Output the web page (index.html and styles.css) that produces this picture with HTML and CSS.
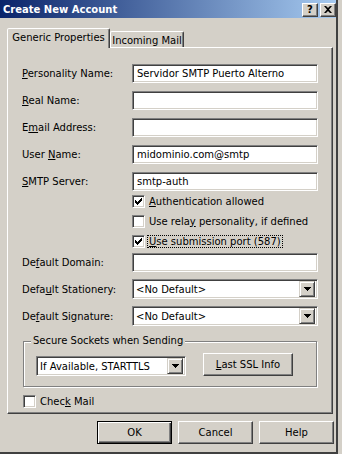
FILE: index.html
```html
<!DOCTYPE html>
<html lang="en">
<head>
    <meta charset="UTF-8">
    <title>Create New Account</title>
    <link rel="stylesheet" href="styles.css">
</head>
<body>
    <div class="window">
        <div class="titlebar">
            <span class="title">Create New Account</span>
            <div class="caption-btns">
                <span class="cbtn help">?</span>
                <span class="cbtn">
                    <svg width="8" height="7" viewBox="0 0 8 7"><path d="M0 0h2l2 2 2-2h2L5 3.5 8 7H6L4 5 2 7H0l3-3.5z" fill="#000"/></svg>
                </span>
            </div>
        </div>

        <div class="client">
            <div class="tabs">
                <div class="tab active">Generic Properties</div>
                <div class="tab">Incoming Mail</div>
            </div>

            <div class="panel">
                <div class="row first">
                    <span class="label"><u>P</u>ersonality Name:</span>
                    <div class="field">Servidor SMTP Puerto Alterno</div>
                </div>
                <div class="row">
                    <span class="label"><u>R</u>eal Name:</span>
                    <div class="field"></div>
                </div>
                <div class="row">
                    <span class="label">E<u>m</u>ail Address:</span>
                    <div class="field"></div>
                </div>
                <div class="row">
                    <span class="label">User <u>N</u>ame:</span>
                    <div class="field">midominio.com@smtp</div>
                </div>
                <div class="row">
                    <span class="label"><u>S</u>MTP Server:</span>
                    <div class="field">smtp-auth</div>
                </div>

                <div class="checks">
                    <div class="check">
                        <span class="box"><svg width="7" height="7" viewBox="0 0 7 7"><path d="M0 2h1v1h1v1h1V3h1V2h1V1h1V0h1v3H6v1H5v1H4v1H3v1H2V6H1V5H0z" fill="#000"/></svg></span>
                        <span><u>A</u>uthentication allowed</span>
                    </div>
                    <div class="check">
                        <span class="box"></span>
                        <span>Use rela<u>y</u> personality, if defined</span>
                    </div>
                    <div class="check">
                        <span class="box"><svg width="7" height="7" viewBox="0 0 7 7"><path d="M0 2h1v1h1v1h1V3h1V2h1V1h1V0h1v3H6v1H5v1H4v1H3v1H2V6H1V5H0z" fill="#000"/></svg></span>
                        <span class="focus"><u>U</u>se submission port (587)</span>
                    </div>
                </div>

                <div class="row domain">
                    <span class="label">De<u>f</u>ault Domain:</span>
                    <div class="field"></div>
                </div>
                <div class="row combo-row">
                    <span class="label">Defa<u>u</u>lt Stationery:</span>
                    <div class="combo">
                        <span class="combo-text">&lt;No Default&gt;</span>
                        <span class="drop"><svg width="7" height="4" viewBox="0 0 7 4"><path d="M0 0h7v1H6v1H5v1H4v1H3V3H2V2H1V1H0z" fill="#000"/></svg></span>
                    </div>
                </div>
                <div class="row combo-row">
                    <span class="label">De<u>f</u>ault Signature:</span>
                    <div class="combo">
                        <span class="combo-text">&lt;No Default&gt;</span>
                        <span class="drop"><svg width="7" height="4" viewBox="0 0 7 4"><path d="M0 0h7v1H6v1H5v1H4v1H3V3H2V2H1V1H0z" fill="#000"/></svg></span>
                    </div>
                </div>

                <div class="group">
                    <span class="group-title">Secure Sockets when Sending</span>
                    <div class="combo ssl">
                        <span class="combo-text">If Available, STARTTLS</span>
                        <span class="drop"><svg width="7" height="4" viewBox="0 0 7 4"><path d="M0 0h7v1H6v1H5v1H4v1H3V3H2V2H1V1H0z" fill="#000"/></svg></span>
                    </div>
                    <div class="btn ssl-btn"><u>L</u>ast SSL Info</div>
                </div>

                <div class="check checkmail">
                    <span class="box"></span>
                    <span>Chec<u>k</u> Mail</span>
                </div>
            </div>

            <div class="buttons">
                <div class="btn default">OK</div>
                <div class="btn">Cancel</div>
                <div class="btn">Help</div>
            </div>
        </div>
    </div>
</body>
</html>
```

FILE: styles.css
```css
* { box-sizing: border-box; }
body {
    margin: 0;
    background: #D4D0C8;
    font-family: "DejaVu Sans", Verdana, sans-serif;
    font-size: 10px;
    color: #000;
}
u { text-decoration: underline; text-underline-offset: 1px; }

.window {
    width: 338px;
    height: 454px;
    border-right: 2px solid #404040;
    border-bottom: 2px solid #404040;
    display: flex;
    flex-direction: column;
}

/* caption */
.titlebar {
    height: 18px;
    background: linear-gradient(to right, #0A246A, #A6CAF0);
    display: flex;
    align-items: center;
    justify-content: space-between;
    padding: 0 0 0 3px;
}
.title {
    color: #fff;
    font-weight: bold;
    font-size: 10px;
}
.caption-btns { display: flex; gap: 2px; margin-top: 1px; }
.cbtn {
    width: 16px;
    height: 14px;
    background: #D4D0C8;
    border: 1px solid;
    border-color: #fff #404040 #404040 #fff;
    box-shadow: inset -1px -1px #808080;
    display: flex;
    align-items: center;
    justify-content: center;
    font-weight: bold;
    font-size: 10px;
    line-height: 1;
}

/* tabs */
.client { padding: 10px 0 0 7px; }
.tabs {
    display: flex;
    align-items: flex-end;
    height: 19px;
}
.tab {
    height: 16px;
    width: 74px;
    border: 1px solid;
    border-bottom: none;
    border-color: #fff #404040 transparent #fff;
    box-shadow: inset -1px 0 #808080;
    border-radius: 2px 2px 0 0;
    text-align: center;
    line-height: 16px;
    padding-top: 1px;
}
.tab.active {
    width: 103px;
    height: 20px;
    margin-bottom: -1px;
    position: relative;
    z-index: 1;
    background: #D4D0C8;
    line-height: 18px;
    padding-top: 0;
}

.panel {
    width: 326px;
    height: 367px;
    border: 1px solid;
    border-color: #fff #404040 #404040 #fff;
    box-shadow: inset -1px -1px #808080;
    padding: 16px 0 0 14px;
}

.row {
    display: flex;
    align-items: center;
    height: 19px;
    margin-bottom: 8px;
}
.label { width: 110px; }
.field {
    width: 186px;
    height: 19px;
    background: #fff;
    border: 1px solid;
    border-color: #808080 #fff #fff #808080;
    box-shadow: inset 1px 1px #404040, inset -1px -1px #D4D0C8;
    padding: 0 4px;
    line-height: 17px;
}

/* checkboxes */
.checks { margin: -8px 0 2px 110px; }
.check {
    display: flex;
    align-items: center;
    height: 20px;
    gap: 4px;
}
.box {
    width: 13px;
    height: 13px;
    background: #fff;
    border: 1px solid;
    border-color: #808080 #fff #fff #808080;
    box-shadow: inset 1px 1px #404040, inset -1px -1px #D4D0C8;
    display: flex;
    align-items: center;
    justify-content: center;
}
.box svg { display: block; }
.focus {
    outline: 1px dotted #000;
    outline-offset: 0;
    padding: 0 1px;
    margin-left: -1px;
}

.domain { margin-bottom: 7px; }
.combo-row { height: 20px; margin-bottom: 7px; }
.combo {
    width: 186px;
    height: 20px;
    background: #fff;
    border: 1px solid;
    border-color: #808080 #fff #fff #808080;
    box-shadow: inset 1px 1px #404040, inset -1px -1px #D4D0C8;
    display: flex;
    align-items: center;
    justify-content: space-between;
    padding: 1px 2px 1px 3px;
}
.drop {
    width: 16px;
    height: 16px;
    background: #D4D0C8;
    border: 1px solid;
    border-color: #D4D0C8 #404040 #404040 #D4D0C8;
    box-shadow: inset 1px 1px #fff, inset -1px -1px #808080;
    display: flex;
    align-items: center;
    justify-content: center;
}
.drop svg { display: block; }

/* group box */
.group {
    position: relative;
    width: 294px;
    height: 46px;
    margin: 15px 0 0 1px;
    border: 1px solid #808080;
    box-shadow: inset 1px 1px #fff, 1px 1px #fff;
    display: flex;
    align-items: center;
    padding: 4px 0 0 12px;
    gap: 17px;
}
.group-title {
    position: absolute;
    top: -7px;
    left: 7px;
    background: #D4D0C8;
    padding: 0 2px;
}
.combo.ssl { width: 150px; }

.btn {
    width: 75px;
    height: 23px;
    border: 1px solid;
    border-color: #fff #404040 #404040 #fff;
    box-shadow: inset -1px -1px #808080;
    display: flex;
    align-items: center;
    justify-content: center;
}
.ssl-btn { width: 90px; margin-top: -3px; }
.btn.default {
    border: 1px solid #000;
    box-shadow: inset 1px 1px #fff, inset -1px -1px #404040, inset -2px -2px #808080;
}

.checkmail { margin: 4px 0 0 1px; }

.buttons {
    width: 327px;
    display: flex;
    justify-content: flex-end;
    gap: 6px;
    margin-top: 7px;
}
```
